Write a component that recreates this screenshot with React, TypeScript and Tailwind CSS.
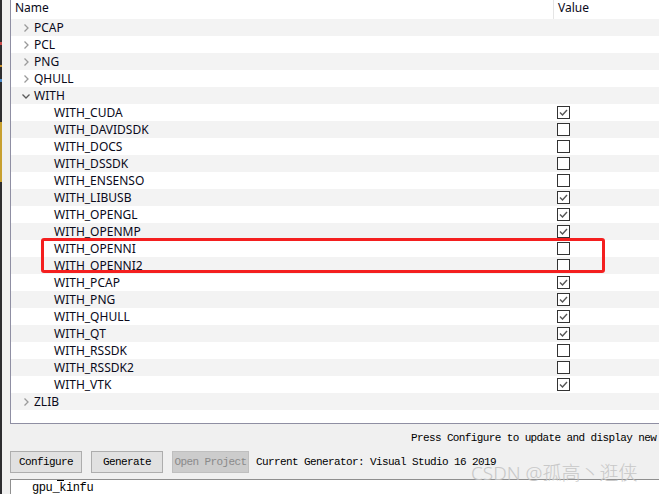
import React from 'react'

type Row = { name: string; level: 0 | 1; open?: boolean; checked?: boolean }

const rows: Row[] = [
  { name: 'PCAP', level: 0 },
  { name: 'PCL', level: 0 },
  { name: 'PNG', level: 0 },
  { name: 'QHULL', level: 0 },
  { name: 'WITH', level: 0, open: true },
  { name: 'WITH_CUDA', level: 1, checked: true },
  { name: 'WITH_DAVIDSDK', level: 1, checked: false },
  { name: 'WITH_DOCS', level: 1, checked: false },
  { name: 'WITH_DSSDK', level: 1, checked: false },
  { name: 'WITH_ENSENSO', level: 1, checked: false },
  { name: 'WITH_LIBUSB', level: 1, checked: true },
  { name: 'WITH_OPENGL', level: 1, checked: true },
  { name: 'WITH_OPENMP', level: 1, checked: true },
  { name: 'WITH_OPENNI', level: 1, checked: false },
  { name: 'WITH_OPENNI2', level: 1, checked: false },
  { name: 'WITH_PCAP', level: 1, checked: true },
  { name: 'WITH_PNG', level: 1, checked: true },
  { name: 'WITH_QHULL', level: 1, checked: true },
  { name: 'WITH_QT', level: 1, checked: true },
  { name: 'WITH_RSSDK', level: 1, checked: false },
  { name: 'WITH_RSSDK2', level: 1, checked: false },
  { name: 'WITH_VTK', level: 1, checked: true },
  { name: 'ZLIB', level: 0 },
]

const ui = { fontFamily: '"Noto Sans", "Open Sans", sans-serif' }
const mono = { fontFamily: '"Liberation Mono", "DejaVu Sans Mono", monospace' }

function Chevron({ open }: { open?: boolean }) {
  return (
    <svg width="10" height="10" viewBox="0 0 10 10" className="shrink-0">
      {open ? (
        <path d="M1.5 3.5 L5 7 L8.5 3.5" fill="none" stroke="#5a5a5a" strokeWidth="1.3" />
      ) : (
        <path d="M3.5 1.5 L7 5 L3.5 8.5" fill="none" stroke="#9a9a9a" strokeWidth="1.3" />
      )}
    </svg>
  )
}

function Check({ on }: { on: boolean }) {
  return (
    <div className="w-[13px] h-[13px] border border-[#333] bg-white flex items-center justify-center">
      {on && (
        <svg width="11" height="11" viewBox="0 0 11 11">
          <path d="M2 5.5 L4.5 8 L9 3" fill="none" stroke="#555" strokeWidth="1.4" />
        </svg>
      )}
    </div>
  )
}

function TreeRow({ row, i }: { row: Row; i: number }) {
  return (
    <div className={`flex h-[17px] items-center ${i % 2 === 0 ? 'bg-[#f3f3f3]' : 'bg-white'}`}>
      <div className="w-[542px] flex items-center">
        {row.level === 0 ? (
          <>
            <div className="w-[23px] flex justify-end pr-[3px]">
              <Chevron open={row.open} />
            </div>
            <span className="text-[12px] text-[#0a0a1a] leading-none">{row.name}</span>
          </>
        ) : (
          <span className="pl-[43px] text-[12px] text-[#0a0a1a] leading-none">{row.name}</span>
        )}
      </div>
      <div className="pl-[4px]">{row.checked !== undefined && <Check on={row.checked} />}</div>
    </div>
  )
}

function Btn({ label, disabled }: { label: string; disabled?: boolean }) {
  return (
    <div
      className={`h-[22px] flex items-center justify-center text-[11px] tracking-[-0.6px] border ${
        disabled ? 'bg-[#cccccc] border-[#bfbfbf] text-[#8a8a8a]' : 'bg-[#e1e1e1] border-[#adadad] text-black'
      }`}
      style={mono}
    >
      {label}
    </div>
  )
}

export default function App() {
  return (
    <div className="relative w-[659px] h-[494px] overflow-hidden flex bg-[#f0f0f0]" style={ui}>
      <div className="w-[2px] h-full bg-[#2d2d30] flex flex-col">
        <div className="h-[42px]" />
        <div className="h-[3px] bg-[#c94a4a]" />
        <div className="h-[20px]" />
        <div className="h-[2px] bg-[#c8902a]" />
        <div className="h-[12px]" />
        <div className="h-[3px] bg-[#4a8ac9]" />
        <div className="h-[40px]" />
        <div className="h-[60px] bg-[#c8a030]" />
        <div className="flex-1" />
      </div>
      <div className="w-[8px] h-full bg-[#f0f0f0]" />
      <div className="flex-1 flex flex-col min-w-0">
        <div className="h-[424px] bg-white border-l border-b border-[#8f8fa3] flex flex-col">
          <div className="h-[19px] flex text-[12px] text-[#0a0a1a]">
            <div className="w-[542px] pl-[4px] pt-[1px] leading-[14px]">Name</div>
            <div className="border-l border-[#e5e5e5] pl-[4px] pt-[1px] leading-[14px]">Value</div>
          </div>
          {rows.map((r, i) => (
            <TreeRow key={r.name} row={r} i={i} />
          ))}
        </div>
        <div className="h-[25px] pl-[401px] pt-[6px] whitespace-nowrap text-[11px] tracking-[-0.62px] text-black" style={mono}>
          Press Configure to update and display new
        </div>
        <div className="flex items-center h-[24px] mt-[1px]">
          <div className="w-[72px]">
            <Btn label="Configure" />
          </div>
          <div className="w-[72px] ml-[9px]">
            <Btn label="Generate" />
          </div>
          <div className="w-[77px] ml-[9px]">
            <Btn label="Open Project" disabled />
          </div>
          <span className="ml-[7px] whitespace-nowrap text-[11px] tracking-[-0.6px] text-black" style={mono}>
            Current Generator: Visual Studio 16 2019
          </span>
        </div>
        <div className="mt-[5px] flex-1 bg-white border-t border-l border-[#8f8f8f] relative">
          <div className="absolute left-[46px] top-[0px] w-[7px] h-[1px] bg-black" />
          <div className="pl-[21px] pt-[2px] text-[12px] tracking-[-0.4px] text-black leading-none" style={mono}>
            gpu_kinfu
          </div>
        </div>
      </div>

      <div className="absolute left-[41px] top-[238px] w-[564px] h-[35px] border-[3px] border-[#f41f1f] rounded-[3px]" />
      <div
        className="absolute left-[471px] top-[459px] text-[19px] font-light text-[#c4c4c4] opacity-90 whitespace-nowrap"
        style={{ fontFamily: '"Noto Sans", "Noto Sans CJK SC", sans-serif' }}
      >
        CSDN @孤高丶逛侠
      </div>
    </div>
  )
}
